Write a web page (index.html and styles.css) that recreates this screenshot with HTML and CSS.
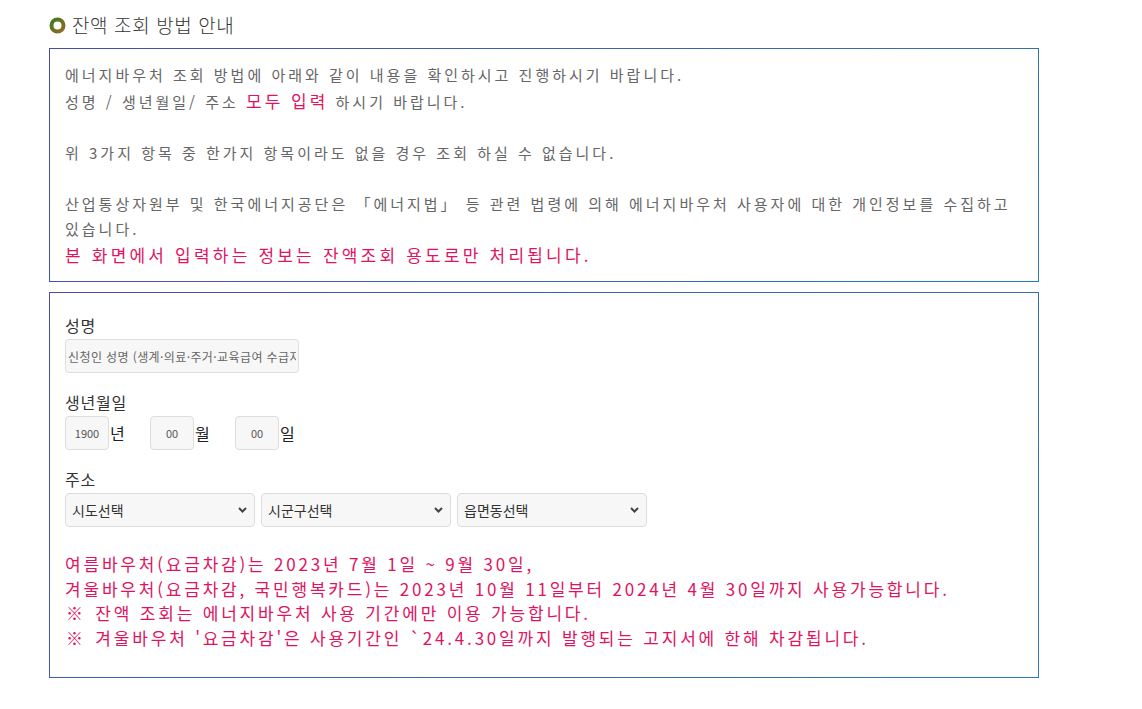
FILE: index.html
```html
<!DOCTYPE html>
<html lang="ko">
<head>
    <meta charset="UTF-8">
    <meta name="viewport" content="width=device-width, initial-scale=1.0">
    <title>잔액 조회 방법 안내</title>
    <link rel="stylesheet" href="styles.css">
</head>
<body>
    <div class="wrap">
        <h3 class="title">
            <svg class="title-icon" width="17" height="17" viewBox="0 0 17 17">
                <defs>
                    <linearGradient id="ring" x1="0" y1="0" x2="1" y2="1">
                        <stop offset="0" stop-color="#3f7a1e"/>
                        <stop offset="1" stop-color="#946a26"/>
                    </linearGradient>
                </defs>
                <circle cx="8.5" cy="8.5" r="6" fill="none" stroke="url(#ring)" stroke-width="4"/>
            </svg>
            잔액 조회 방법 안내
        </h3>

        <div class="box guide">
            <p>에너지바우처 조회 방법에 아래와 같이 내용을 확인하시고 진행하시기 바랍니다.</p>
            <p>성명 / 생년월일/ 주소 <span class="red big">모두 입력</span> 하시기 바랍니다.</p>
            <p class="blank"></p>
            <p>위 3가지 항목 중 한가지 항목이라도 없을 경우 조회 하실 수 없습니다.</p>
            <p class="blank"></p>
            <p>산업통상자원부 및 한국에너지공단은 「에너지법」 등 관련 법령에 의해 에너지바우처 사용자에 대한 개인정보를 수집하고 있습니다.</p>
            <p class="red big">본 화면에서 입력하는 정보는 잔액조회 용도로만 처리됩니다.</p>
        </div>

        <form class="box search" onsubmit="return false">
            <div class="field">
                <label for="userName">성명</label>
                <input type="text" id="userName" class="name-input" placeholder="신청인 성명 (생계·의료·주거·교육급여 수급자)">
            </div>

            <div class="field">
                <label for="birthYear">생년월일</label>
                <div class="birth">
                    <span class="unit"><input type="text" id="birthYear" class="small-input" value="1900">년</span>
                    <span class="unit"><input type="text" class="small-input" value="00">월</span>
                    <span class="unit"><input type="text" class="small-input" value="00">일</span>
                </div>
            </div>

            <div class="field">
                <label for="sido">주소</label>
                <div class="addr">
                    <div class="select-wrap">
                        <select id="sido"><option>시도선택</option></select>
                        <svg class="chev" width="9" height="6" viewBox="0 0 9 6"><path d="M1 1l3.5 3.5L8 1" fill="none" stroke="#444" stroke-width="2"/></svg>
                    </div>
                    <div class="select-wrap">
                        <select><option>시군구선택</option></select>
                        <svg class="chev" width="9" height="6" viewBox="0 0 9 6"><path d="M1 1l3.5 3.5L8 1" fill="none" stroke="#444" stroke-width="2"/></svg>
                    </div>
                    <div class="select-wrap">
                        <select><option>읍면동선택</option></select>
                        <svg class="chev" width="9" height="6" viewBox="0 0 9 6"><path d="M1 1l3.5 3.5L8 1" fill="none" stroke="#444" stroke-width="2"/></svg>
                    </div>
                </div>
            </div>

            <div class="notice">
                <p>여름바우처(요금차감)는 2023년 7월 1일 ~ 9월 30일,</p>
                <p>겨울바우처(요금차감, 국민행복카드)는 2023년 10월 11일부터 2024년 4월 30일까지 사용가능합니다.</p>
                <p><b class="mark">※</b> 잔액 조회는 에너지바우처 사용 기간에만 이용 가능합니다.</p>
                <p><b class="mark">※</b> 겨울바우처 '요금차감'은 사용기간인 `24.4.30일까지 발행되는 고지서에 한해 차감됩니다.</p>
            </div>
        </form>
    </div>
</body>
</html>
```

FILE: styles.css
```css
body {
    margin: 0;
    font-family: "Noto Sans CJK KR", "Noto Sans", sans-serif;
    color: #333;
    background: #fff;
}
.wrap {
    width: 990px;
    padding: 12px 0 0 49px;
}
.title {
    display: flex;
    align-items: center;
    gap: 6px;
    margin: 0 0 11px;
    height: 25px;
    font-size: 19px;
    font-weight: 300;
    letter-spacing: 0.6px;
    color: #333;
}
.title-icon {
    flex: none;
    margin-top: 1px;
}
.box {
    border: 1px solid #3a7ab2;
    border-image: linear-gradient(135deg, #4a4ca6, #2a7cb2) 1;
    box-sizing: border-box;
    width: 990px;
    padding: 13px 15px 14px;
}
.guide p {
    margin: 0;
    font-size: 15px;
    line-height: 25.5px;
    letter-spacing: 3px;
    color: #666;
    word-break: keep-all;
}
.guide .blank {
    height: 25.5px;
}
.red {
    color: #e0135f;
}
.big {
    font-size: 17px;
}
.guide .red {
    color: #e0135f;
}
.guide p.red {
    font-size: 17px;
    letter-spacing: 3.2px;
}
.search {
    margin-top: 10px;
    padding: 20px 15px 26px;
}
.field {
    margin-bottom: 17px;
}
.field label {
    display: block;
    font-size: 16px;
    letter-spacing: 0.8px;
    line-height: 24px;
    margin-bottom: 2px;
    color: #333;
}
input, select {
    font-family: inherit;
    box-sizing: border-box;
    height: 34px;
    background: #f7f7f7;
    border: 1px solid #ddd;
    border-radius: 4px;
    color: #555;
    outline: none;
}
.name-input {
    width: 234px;
    padding: 0 2px;
    font-size: 12px;
    letter-spacing: 0.4px;
}
.name-input::placeholder {
    color: #666;
}
.birth {
    display: flex;
    gap: 24px;
}
.unit {
    display: flex;
    align-items: center;
    gap: 1px;
    font-size: 16px;
    width: 61px;
    color: #222;
}
.small-input {
    width: 44px;
    font-size: 11px;
    text-align: center;
}
.addr {
    display: flex;
    gap: 6px;
}
.select-wrap {
    position: relative;
}
.select-wrap select {
    appearance: none;
    width: 190px;
    padding: 0 6px;
    font-size: 14px;
    color: #333;
}
.chev {
    position: absolute;
    right: 8px;
    top: 14px;
    pointer-events: none;
}
.notice {
    margin-top: 25px;
}
.notice p {
    margin: 0;
    font-size: 17px;
    line-height: 24.7px;
    letter-spacing: 2.8px;
    color: #e0135f;
}
.mark {
    font-weight: bold;
    margin: 0 2px 0 1px;
}
```
